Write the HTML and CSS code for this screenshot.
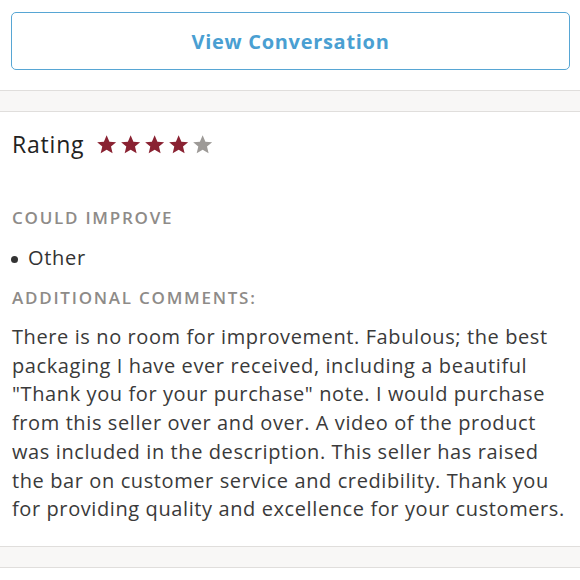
FILE: index.html
```html
<!DOCTYPE html>
<html>
<head>
<meta charset="utf-8">
<link rel="stylesheet" href="styles.css">
</head>
<body>
<div class="top">
  <button class="btn">View Conversation</button>
</div>
<div class="divider"></div>
<section class="review">
  <div class="rating-row">
    <h2 class="rating-title">Rating</h2>
    <div class="stars">
      <svg class="star on" viewBox="0 0 24 24"><path d="M12 1.5l3.1 7.1 7.6.6-5.8 5 1.8 7.5L12 17.7l-6.7 4 1.8-7.5-5.8-5 7.6-.6z"/></svg>
      <svg class="star on" viewBox="0 0 24 24"><path d="M12 1.5l3.1 7.1 7.6.6-5.8 5 1.8 7.5L12 17.7l-6.7 4 1.8-7.5-5.8-5 7.6-.6z"/></svg>
      <svg class="star on" viewBox="0 0 24 24"><path d="M12 1.5l3.1 7.1 7.6.6-5.8 5 1.8 7.5L12 17.7l-6.7 4 1.8-7.5-5.8-5 7.6-.6z"/></svg>
      <svg class="star on" viewBox="0 0 24 24"><path d="M12 1.5l3.1 7.1 7.6.6-5.8 5 1.8 7.5L12 17.7l-6.7 4 1.8-7.5-5.8-5 7.6-.6z"/></svg>
      <svg class="star off" viewBox="0 0 24 24"><path d="M12 1.5l3.1 7.1 7.6.6-5.8 5 1.8 7.5L12 17.7l-6.7 4 1.8-7.5-5.8-5 7.6-.6z"/></svg>
    </div>
  </div>
  <h3 class="label label-first">COULD IMPROVE</h3>
  <ul class="list">
    <li>Other</li>
  </ul>
  <h3 class="label">ADDITIONAL COMMENTS:</h3>
  <p class="comment">There is no room for improvement. Fabulous; the best packaging I have ever received, including a beautiful "Thank you for your purchase" note. I would purchase from this seller over and over. A video of the product was included in the description. This seller has raised the bar on customer service and credibility. Thank you for providing quality and excellence for your customers.</p>
</section>
<div class="divider"></div>
</body>
</html>
```

FILE: styles.css
```css
* { box-sizing: border-box; }
html, body { margin: 0; padding: 0; background: #fff; }
body { font-family: "Open Sans", Lato, sans-serif; color: #3a3a3a; }

.top { padding: 12px 10px 20px 11px; }
.btn {
  display: block;
  width: 100%;
  height: 58px;
  border: 1.5px solid #57a6d4;
  border-radius: 5px;
  background: #fff;
  color: #4a9fd2;
  font-family: "Open Sans", sans-serif;
  font-weight: 700;
  font-size: 20px;
  letter-spacing: 0.7px;
  padding: 0;
}

.divider {
  height: 22px;
  background: #f8f7f6;
  border-top: 1.5px solid #e0dedc;
  border-bottom: 1.5px solid #e0dedc;
}

.review { padding: 17px 10px 22px 12px; }

.rating-row { display: flex; align-items: center; height: 30px; }
.rating-title {
  margin: 0 12px 0 0;
  font-size: 23px;
  font-weight: 400;
  color: #222;
  line-height: 30px;
  letter-spacing: 0.8px;
}
.stars { display: flex; gap: 2.7px; margin-top: 2px; }
.star { width: 21.3px; height: 21.3px; display: block; }
.star.on { fill: #8a2232; }
.star.off { fill: #9d9a97; }

.label {
  margin: 14px 0 0 0;
  font-size: 17px;
  font-weight: 600;
  letter-spacing: 1.75px;
  color: #8e8b88;
  line-height: 24px;
}
.label-first { margin-top: 47px; }

.list { list-style: none; margin: 14px 0 0 0; padding: 0; }
.list li {
  font-size: 20px;
  line-height: 28px;
  letter-spacing: 0.7px;
  color: #333;
  display: flex;
  align-items: center;
}
.list li::before {
  content: "";
  width: 7px;
  height: 7px;
  border-radius: 50%;
  background: #333;
  margin: 2px 10px 0 -1px;
}

.comment {
  margin: 13px 0 0 0;
  font-size: 20px;
  line-height: 28.7px;
  letter-spacing: 0.6px;
  color: #3a3a3a;
}
```
